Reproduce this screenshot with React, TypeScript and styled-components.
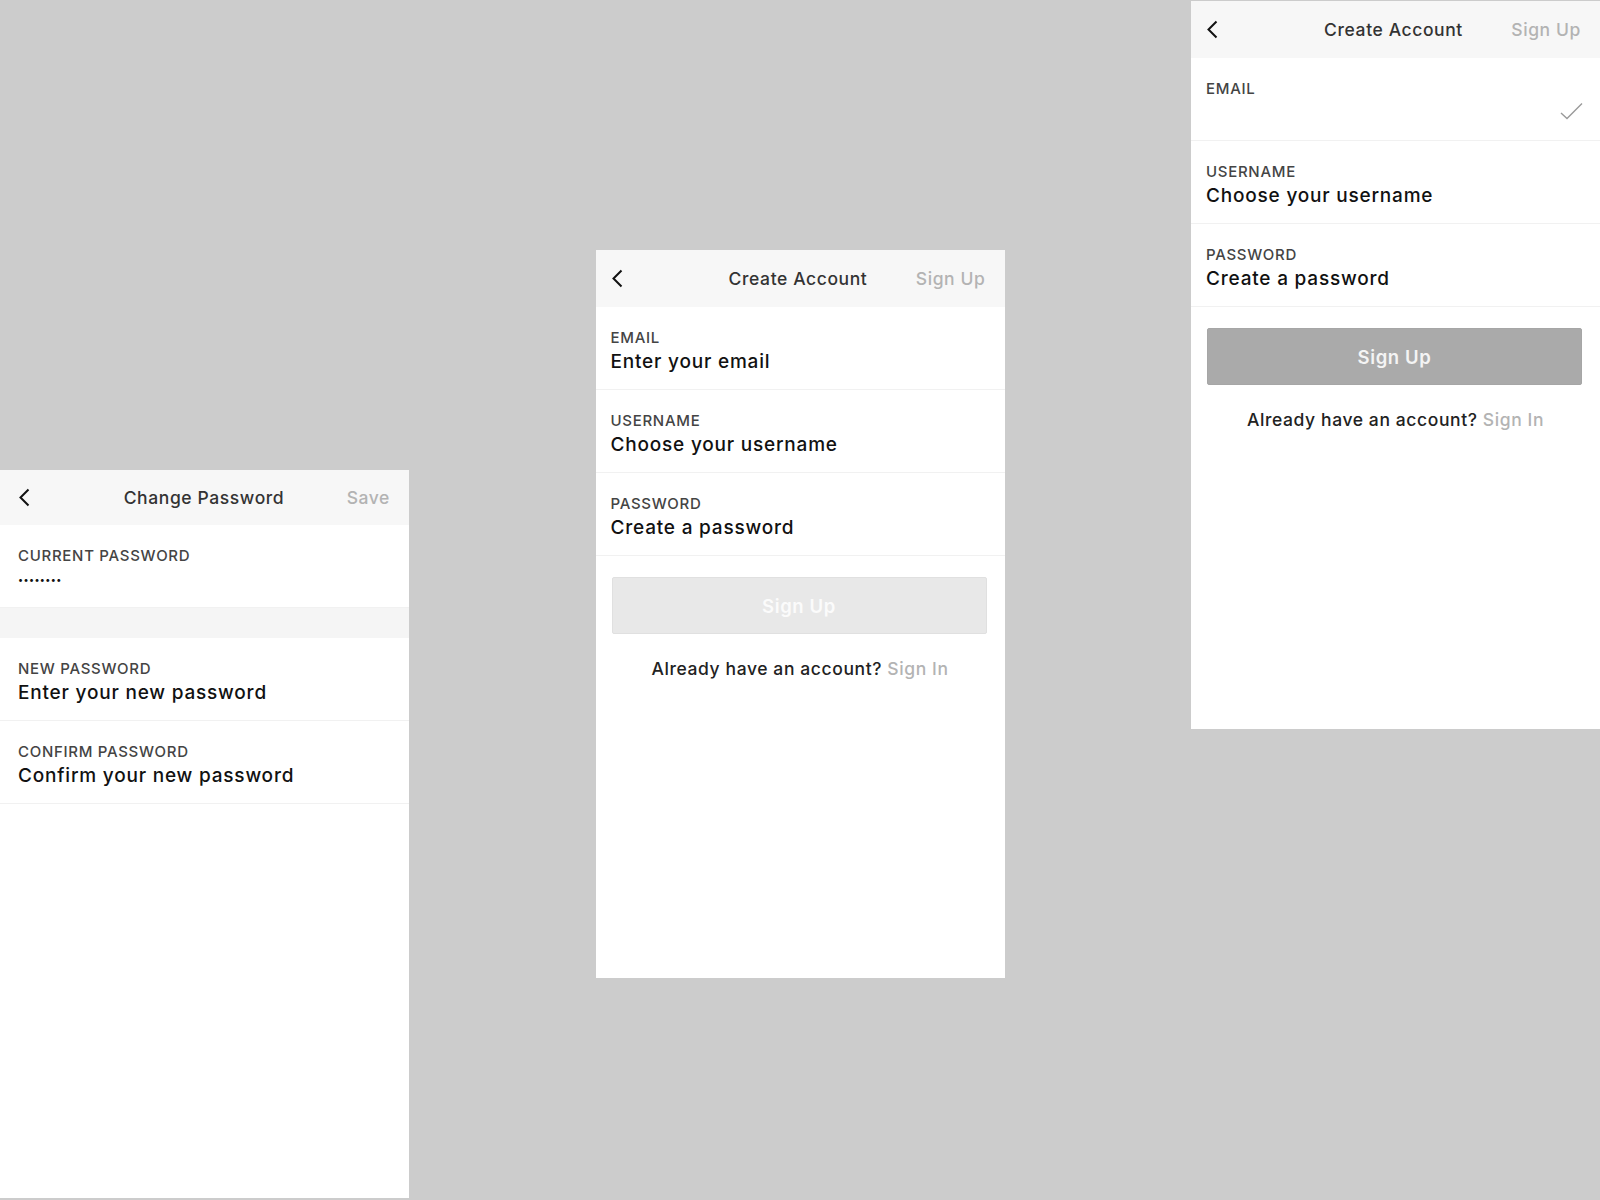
import React from 'react'
import styled, { createGlobalStyle } from 'styled-components'

const GlobalStyle = createGlobalStyle`
  html, body {
    margin: 0;
    padding: 0;
    background: #cccccc;
  }

  body {
    font-family: Inter, 'Open Sans', 'Liberation Sans', sans-serif;
    color: #111;
    -webkit-font-smoothing: antialiased;
  }
`

const Stage = styled.div`
  width: 1600px;
  height: 1200px;
  display: flex;
  justify-content: space-between;
  align-items: flex-start;
  overflow: hidden;
`

const Screen = styled.div<{ $top: number; $inset?: number; $bar?: number }>`
  --inset: ${(p) => p.$inset ?? 15}px;
  --bar: ${(p) => p.$bar ?? 57}px;
  width: 409px;
  height: 728px;
  margin-top: ${(p) => p.$top}px;
  background: #fff;
  display: flex;
  flex-direction: column;
`

const NavBar = styled.header`
  height: var(--bar);
  flex-shrink: 0;
  background: #f7f7f7;
  display: grid;
  grid-template-columns: 1fr auto 1fr;
  align-items: center;
  padding: 0 19px 0 var(--inset);
`

const BackButton = styled.button`
  border: 0;
  background: none;
  padding: 0;
  width: 14px;
  height: 20px;
  display: flex;
  align-items: center;
  cursor: pointer;
`

const NavTitle = styled.h1`
  margin: 0;
  font-size: 17.5px;
  font-weight: 500;
  letter-spacing: 0.6px;
  color: #333;
`

const NavAction = styled.span`
  justify-self: end;
  font-size: 17.5px;
  font-weight: 500;
  letter-spacing: 0.6px;
  color: #b3b3b3;
`

const Field = styled.div`
  height: 83px;
  flex-shrink: 0;
  box-sizing: border-box;
  border-bottom: 1px solid #f1f1f1;
  padding: 6px 16px 0 var(--inset);
  display: flex;
  flex-direction: column;
  justify-content: center;
  gap: 3px;
`

const FieldLabel = styled.label`
  font-size: 15px;
  line-height: 18px;
  font-weight: 500;
  letter-spacing: 0.7px;
  text-transform: uppercase;
  color: #444;
`

const ValueLine = styled.div`
  display: flex;
  align-items: center;
  justify-content: space-between;
  min-height: 23px;
`

const FieldValue = styled.span<{ $masked?: boolean }>`
  font-size: ${(p) => (p.$masked ? '9.5px' : '19px')};
  line-height: 23px;
  font-weight: 500;
  letter-spacing: ${(p) => (p.$masked ? '0.4px' : '0.8px')};
  color: #111;
`

const Check = styled.svg`
  margin-right: 1px;
  margin-top: -4px;
`

const SectionGap = styled.div`
  height: 30px;
  flex-shrink: 0;
  background: #f5f5f5;
`

const SubmitButton = styled.button<{ $ready?: boolean }>`
  margin: 21px 18px 0 16px;
  height: 57px;
  flex-shrink: 0;
  border-radius: 2px;
  border: 1px solid ${(p) => (p.$ready ? '#a6a6a6' : '#e0e0e0')};
  background: ${(p) => (p.$ready ? '#aaaaaa' : '#e8e8e8')};
  color: ${(p) => (p.$ready ? '#f4f4f4' : '#fbfbfb')};
  font-family: inherit;
  font-size: 18.5px;
  font-weight: 600;
  letter-spacing: 0.6px;
  cursor: pointer;
`

const Footer = styled.p`
  margin: 24px 0 0;
  text-align: center;
  font-size: 17.5px;
  line-height: 21px;
  font-weight: 500;
  letter-spacing: 0.6px;
  color: #222;
`

const FooterLink = styled.a`
  color: #b3b3b3;
  text-decoration: none;
`

const Chevron = () => (
  <svg width="12" height="19" viewBox="0 0 12 19">
    <polyline points="10.5,1.5 2.5,9.5 10.5,17.5" fill="none" stroke="#111" strokeWidth="2" />
  </svg>
)

const CheckIcon = () => (
  <Check width="23" height="18" viewBox="0 0 23 18">
    <polyline points="1,11 7,16.5 22,1.5" fill="none" stroke="#9a9a9a" strokeWidth="1.4" />
  </Check>
)

type NavProps = { title: string; action: string }

const Nav = ({ title, action }: NavProps) => (
  <NavBar>
    <BackButton aria-label="Back">
      <Chevron />
    </BackButton>
    <NavTitle>{title}</NavTitle>
    <NavAction>{action}</NavAction>
  </NavBar>
)

type FieldProps = {
  label: string
  value?: string
  masked?: boolean
  valid?: boolean
}

const FormField = ({ label, value, masked, valid }: FieldProps) => (
  <Field>
    <FieldLabel>{label}</FieldLabel>
    <ValueLine>
      <FieldValue $masked={masked}>{value}</FieldValue>
      {valid && <CheckIcon />}
    </ValueLine>
  </Field>
)

const SignUpScreen = ({ top, ready }: { top: number; ready?: boolean }) => (
  <Screen $top={top}>
    <Nav title="Create Account" action="Sign Up" />
    <FormField label="Email" value={ready ? '' : 'Enter your email'} valid={ready} />
    <FormField label="Username" value="Choose your username" />
    <FormField label="Password" value="Create a password" />
    <SubmitButton $ready={ready}>Sign Up</SubmitButton>
    <Footer>
      Already have an account? <FooterLink href="#">Sign In</FooterLink>
    </Footer>
  </Screen>
)

const ChangePasswordScreen = () => (
  <Screen $top={470} $inset={18} $bar={55}>
    <Nav title="Change Password" action="Save" />
    <FormField label="Current Password" value="••••••••" masked />
    <SectionGap />
    <FormField label="New Password" value="Enter your new password" />
    <FormField label="Confirm Password" value="Confirm your new password" />
  </Screen>
)

const App = () => (
  <>
    <GlobalStyle />
    <Stage>
      <ChangePasswordScreen />
      <SignUpScreen top={250} />
      <SignUpScreen top={1} ready />
    </Stage>
  </>
)

export default App
